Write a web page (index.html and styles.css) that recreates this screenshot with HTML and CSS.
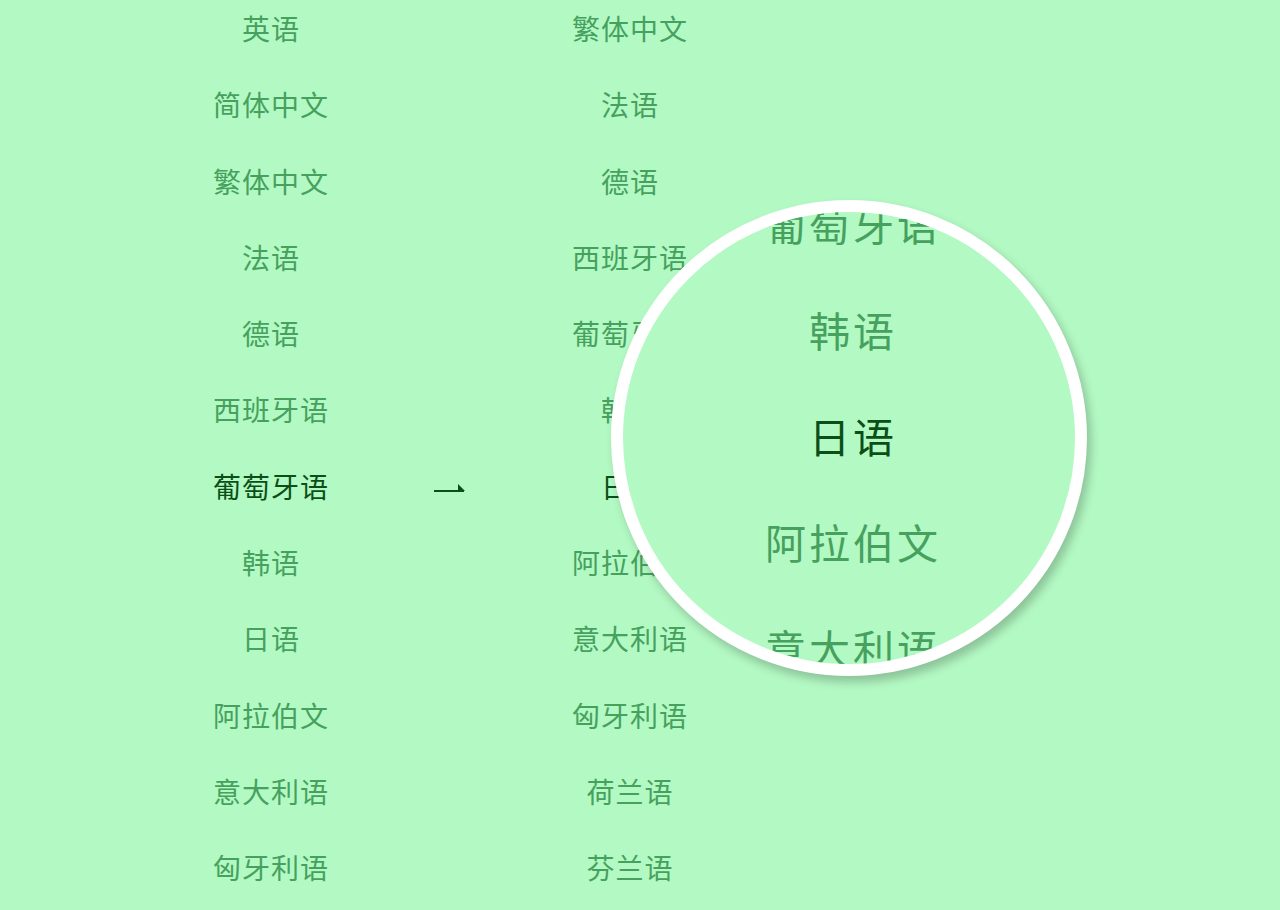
FILE: index.html
```html
<!DOCTYPE html>
<html lang="zh-CN">
<head>
<meta charset="utf-8">
<title>语言选择</title>
<link rel="stylesheet" href="styles.css">
</head>
<body>
<main class="stage">
  <div class="table">
    <div class="cell">英语</div><div class="mid"></div><div class="cell">繁体中文</div>
    <div class="cell">简体中文</div><div class="mid"></div><div class="cell">法语</div>
    <div class="cell">繁体中文</div><div class="mid"></div><div class="cell">德语</div>
    <div class="cell">法语</div><div class="mid"></div><div class="cell">西班牙语</div>
    <div class="cell">德语</div><div class="mid"></div><div class="cell">葡萄牙语</div>
    <div class="cell">西班牙语</div><div class="mid"></div><div class="cell">韩语</div>
    <div class="cell active">葡萄牙语</div>
    <div class="mid"><svg class="arrow" width="36" height="12" viewBox="0 0 36 12"><rect x="1" y="8" width="30" height="2" fill="#0b4f18"/><polygon points="25,2 32,9 25,9" fill="#0b4f18"/></svg></div>
    <div class="cell active">日语</div>
    <div class="cell">韩语</div><div class="mid"></div><div class="cell">阿拉伯文</div>
    <div class="cell">日语</div><div class="mid"></div><div class="cell">意大利语</div>
    <div class="cell">阿拉伯文</div><div class="mid"></div><div class="cell">匈牙利语</div>
    <div class="cell">意大利语</div><div class="mid"></div><div class="cell">荷兰语</div>
    <div class="cell">匈牙利语</div><div class="mid"></div><div class="cell">芬兰语</div>
  </div>
  <div class="lens">
    <div class="lens-list">
      <div class="lens-item">繁体中文</div>
      <div class="lens-item">法语</div>
      <div class="lens-item">德语</div>
      <div class="lens-item">西班牙语</div>
      <div class="lens-item">葡萄牙语</div>
      <div class="lens-item">韩语</div>
      <div class="lens-item active">日语</div>
      <div class="lens-item">阿拉伯文</div>
      <div class="lens-item">意大利语</div>
      <div class="lens-item">匈牙利语</div>
    </div>
  </div>
</main>
</body>
</html>
```
FILE: styles.css
```css
html, body {
  margin: 0;
  padding: 0;
  background: #b3f9c3;
  height: 100%;
  overflow: hidden;
}
body {
  font-family: "Noto Sans CJK SC", "Noto Sans", sans-serif;
  font-weight: 400;
}
.stage {
  position: relative;
  width: 1280px;
  height: 910px;
  overflow: hidden;
}
.table {
  display: grid;
  grid-template-columns: 200px 159px 200px;
  grid-auto-rows: 76.27px;
  padding-left: 171px;
  margin-top: -10px;
}
.cell {
  display: flex;
  align-items: center;
  justify-content: center;
  font-size: 28px;
  letter-spacing: 1px;
  color: #46a15e;
  line-height: 1;
}
.cell.active {
  color: #0b4f18;
}
.mid {
  display: flex;
  align-items: center;
  justify-content: center;
}
.arrow {
  display: block;
  margin-top: 4px;
}
.lens {
  position: absolute;
  left: 611px;
  top: 200px;
  width: 452px;
  height: 452px;
  border: 12px solid #ffffff;
  border-radius: 50%;
  overflow: hidden;
  background: #b3f9c3;
  box-shadow: 4px 6px 10px rgba(0, 0, 0, 0.22);
}
.lens-list {
  display: flex;
  flex-direction: column;
  margin-top: -466px;
  padding-left: 8px;
}
.lens-item {
  height: 106px;
  display: flex;
  align-items: center;
  justify-content: center;
  font-size: 41px;
  letter-spacing: 3px;
  line-height: 1;
  color: #46a15e;
}
.lens-item.active {
  color: #0b4f18;
}
```
